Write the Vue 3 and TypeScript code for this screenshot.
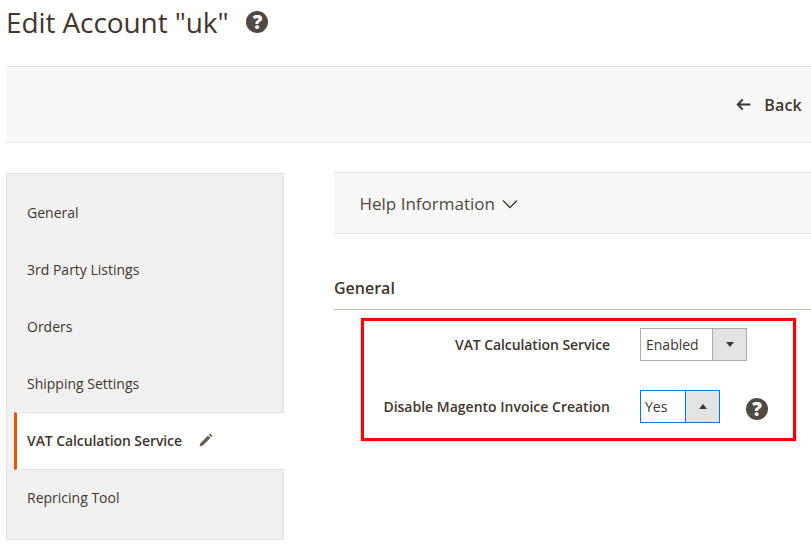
<script setup lang="ts">
const items = [
  { label: 'General', active: false },
  { label: '3rd Party Listings', active: false },
  { label: 'Orders', active: false },
  { label: 'Shipping Settings', active: false },
  { label: 'VAT Calculation Service', active: true },
  { label: 'Repricing Tool', active: false },
]
</script>

<template>
  <div class="page">
    <header class="title-row">
      <h1 class="title">Edit Account "uk"</h1>
      <span class="help help-title" aria-hidden="true">?</span>
    </header>

    <div class="toolbar">
      <svg class="arrow" viewBox="0 0 16 14" aria-hidden="true">
        <path d="M15.500 7H2M7.200 1.500 1.800 7 7.200 12.500" fill="none" stroke="#41362f" stroke-width="2.100" />
      </svg>
      <span class="back">Back</span>
    </div>

    <div class="columns">
      <nav class="sidebar">
        <div v-for="item in items" :key="item.label" class="nav-item" :class="{ active: item.active }">
          <span>{{ item.label }}</span>
          <svg v-if="item.active" class="pencil" viewBox="0 0 16 16" aria-hidden="true">
            <path d="M.5 15.500l1.100-3.900 8.700-8.700 2.800 2.800-8.700 8.700z M11.200 2l1.500-1.500 2.800 2.800-1.500 1.500z" fill="#676056" />
          </svg>
        </div>
      </nav>

      <main class="content">
        <div class="help-info">
          <span>Help Information</span>
          <svg class="chevron" viewBox="0 0 16 10" aria-hidden="true">
            <path d="M1 1.500 8 8.500 15 1.500" fill="none" stroke="#41362f" stroke-width="1.300" />
          </svg>
        </div>

        <h2 class="section">General</h2>

        <div class="highlight">
          <div class="field">
            <label class="field-label tight">VAT Calculation Service</label>
            <div class="select">
              <span class="select-value">Enabled</span>
              <span class="select-btn"><i class="tri down"></i></span>
            </div>
          </div>
          <div class="field field-second">
            <label class="field-label">Disable Magento Invoice Creation</label>
            <div class="select open">
              <span class="select-value">Yes</span>
              <span class="select-btn"><i class="tri up"></i></span>
            </div>
            <span class="help help-field" aria-hidden="true">?</span>
          </div>
        </div>
      </main>
    </div>
  </div>
</template>

<style>
html, body { margin: 0; background: #fff; }
</style>

<style scoped>
.page {
  width: 811px;
  height: 549px;
  overflow: hidden;
  box-sizing: border-box;
  padding-left: 6px;
  font-family: "Open Sans", sans-serif;
  color: #41362f;
  font-size: 14px;
  text-rendering: optimizeLegibility;
  font-kerning: normal;
}
.title-row {
  display: flex;
  align-items: center;
  height: 44px;
}
.title {
  margin: 0;
  font-size: 28px;
  font-weight: 400;
  line-height: 44px;
  letter-spacing: -0.1px;
  color: #41362f;
}
.help {
  width: 22px;
  height: 22px;
  flex: none;
  display: block;
  border-radius: 50%;
  background: #514943;
  color: #fff;
  text-align: center;
  font-size: 19px;
  font-weight: 800;
  line-height: 22px;
}
.help-title { margin-left: 18px; }
.toolbar {
  margin-top: 22px;
  height: 75px;
  background: #f8f8f8;
  border-top: 1px solid #e3e3e3;
  border-bottom: 1px solid #e3e3e3;
  display: flex;
  align-items: center;
  justify-content: flex-end;
  padding-right: 9px;
}
.arrow { width: 15px; height: 13px; margin-right: 13px; }
.back { font-size: 16px; font-weight: 600; letter-spacing: 0.2px; color: #41362f; }
.columns {
  display: flex;
  align-items: flex-start;
  margin-top: 29px;
}
.sidebar {
  width: 278px;
  height: 367px;
  margin-top: 1px;
  padding-top: 10px;
  box-sizing: border-box;
  background: #f1f1f1;
  border: 1px solid #e3e3e3;
  flex: none;
}
.nav-item {
  height: 57px;
  box-sizing: border-box;
  padding-left: 20px;
  display: flex;
  align-items: center;
  font-size: 14px;
  color: #41362f;
}
.nav-item.active {
  height: 58px;
  margin-left: 7px;
  margin-right: -1px;
  margin-bottom: -1px;
  padding-left: 10px;
  padding-bottom: 1px;
  background: #fff;
  border-left: 3px solid #eb5202;
  border-top: 1px solid #e3e3e3;
  border-bottom: 1px solid #e3e3e3;
  font-weight: 600;
  letter-spacing: -0.09px;
  color: #41362f;
}
.pencil { width: 14px; height: 14px; margin: 0 0 2px 17px; }
.content {
  margin-left: 50px;
  width: 477px;
  flex: none;
}
.help-info {
  height: 60px;
  background: #f8f8f8;
  border-top: 1px solid #e3e3e3;
  border-bottom: 1px solid #e3e3e3;
  display: flex;
  align-items: center;
  padding-left: 25.500px;
  font-size: 17px;
  color: #514943;
}
.chevron { width: 16px; height: 10px; margin: 2px 0 0 7px; }
.section {
  margin: 0;
  height: 76px;
  box-sizing: border-box;
  border-bottom: 1px solid #c4bdb4;
  padding-top: 42px;
  font-size: 16px;
  font-weight: 600;
  line-height: 24px;
  color: #41362f;
}
.highlight {
  margin: 8px 0 0 27px;
  width: 435px;
  height: 123px;
  box-sizing: border-box;
  border: 3px solid #f00;
  box-shadow: 0 0 1px rgba(255, 0, 0, 0.7);
  padding-top: 7px;
}
.field {
  display: flex;
  align-items: center;
  height: 33px;
}
.field-second { margin-top: 29px; }
.field-label {
  width: 246px;
  flex: none;
  text-align: right;
  font-weight: 600;
  font-size: 14px;
  color: #41362f;
}
.field-label.tight { letter-spacing: -0.09px; }
.select {
  margin-left: 30px;
  width: 107px;
  height: 33px;
  box-sizing: border-box;
  border: 1px solid #adadad;
  display: flex;
  background: #fff;
}
.select-value {
  flex: 1;
  padding-left: 5px;
  line-height: 31px;
  font-size: 14px;
  color: #41362f;
}
.select-btn {
  width: 33px;
  flex: none;
  background: #e3e3e3;
  border-left: 1px solid #adadad;
  display: flex;
  align-items: center;
  justify-content: center;
}
.select.open { width: 80px; border-color: #007bdb; }
.select.open .select-value { padding-left: 4px; }
.select.open .select-btn { border-left-color: #007bdb; }
.tri { width: 0; height: 0; border-left: 4px solid transparent; border-right: 4px solid transparent; display: block; }
.tri.down { border-top: 5px solid #41362f; }
.tri.up { border-bottom: 5px solid #41362f; }
.help-field { margin: 4px 0 0 26px; }
</style>
